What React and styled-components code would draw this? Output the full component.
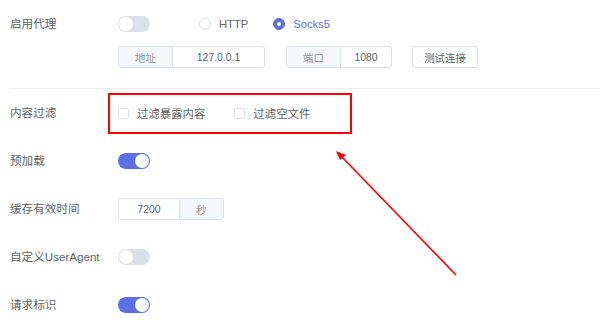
import React from "react";
import styled, { createGlobalStyle } from "styled-components";

const GlobalStyle = createGlobalStyle`
  html, body { margin: 0; padding: 0; background: #fff; }
  body {
    font-family: "Liberation Sans", "Noto Sans CJK SC", sans-serif;
    -webkit-font-smoothing: antialiased;
  }
  * { box-sizing: border-box; }
`;

const BLUE = "#5b6fe6";

const Page = styled.div`
  position: relative;
  width: 600px;
  height: 322px;
  overflow: hidden;
  background: #fff;
`;

const TopSection = styled.div`
  margin-left: 10px;
  padding: 8px 0 20px;
  border-bottom: 1px solid #ebeef5;
  display: flex;
  align-items: flex-start;
`;

const Label = styled.div`
  width: 108px;
  flex: none;
  font-size: 11.6px;
  color: #606266;
  line-height: ${(p) => p.$lh || "16px"};
  white-space: nowrap;
`;

const Stack = styled.div`
  display: flex;
  flex-direction: column;
  gap: 6px;
`;

const Line = styled.div`
  display: flex;
  align-items: center;
  height: ${(p) => p.$h || "auto"};
`;

const Track = styled.div`
  position: relative;
  width: 32px;
  height: 16px;
  border-radius: 8px;
  background: ${(p) => (p.$on ? BLUE : "#dcdfe6")};
  flex: none;
`;

const Knob = styled.span`
  position: absolute;
  top: 1px;
  left: ${(p) => (p.$on ? "17px" : "1px")};
  width: 14px;
  height: 14px;
  border-radius: 50%;
  background: #fff;
`;

const Switch = ({ on }) => (
  <Track $on={on}>
    <Knob $on={on} />
  </Track>
);

const RadioGroup = styled.div`
  display: flex;
  align-items: center;
  margin-left: 49px;
  gap: 25px;
`;

const RadioItem = styled.label`
  display: flex;
  align-items: center;
  gap: 8px;
  font-size: 11.2px;
  color: ${(p) => (p.$checked ? BLUE : "#606266")};
`;

const RadioDot = styled.span`
  width: 12px;
  height: 12px;
  border-radius: 50%;
  border: 1px solid ${(p) => (p.$checked ? BLUE : "#dcdfe6")};
  background: ${(p) => (p.$checked ? BLUE : "#fff")};
  display: flex;
  align-items: center;
  justify-content: center;
  &::after {
    content: "";
    width: 4px;
    height: 4px;
    border-radius: 50%;
    background: #fff;
    display: ${(p) => (p.$checked ? "block" : "none")};
  }
`;

const InputGroup = styled.div`
  display: flex;
  width: ${(p) => p.$w}px;
  height: 22px;
  margin-left: ${(p) => p.$ml || 0}px;
  border: 1px solid #dcdfe6;
  border-radius: 3px;
  overflow: hidden;
  font-size: 10.4px;
`;

const Addon = styled.div`
  width: ${(p) => p.$w}px;
  flex: none;
  background: #f5f7fa;
  color: #909399;
  display: flex;
  align-items: center;
  justify-content: center;
  border-${(p) => (p.$side === "right" ? "left" : "right")}: 1px solid #dcdfe6;
`;

const Value = styled.div`
  flex: 1;
  display: flex;
  align-items: center;
  justify-content: center;
  color: #606266;
`;

const Button = styled.div`
  margin-left: 20px;
  width: 66px;
  height: 22px;
  border: 1px solid #dcdfe6;
  border-radius: 3px;
  font-size: 10.4px;
  color: #606266;
  display: flex;
  align-items: center;
  justify-content: center;
`;

const List = styled.div`
  margin-left: 10px;
`;

const Row = styled.div`
  display: flex;
  align-items: center;
  height: 48px;
`;

const CheckGroup = styled.div`
  margin-left: -10px;
  width: 244px;
  height: 41px;
  border: 2px solid #f00;
  padding-left: 8px;
  display: flex;
  align-items: center;
  gap: 29px;
`;

const CheckItem = styled.label`
  display: flex;
  align-items: center;
  gap: 8px;
  font-size: 11.4px;
  color: #606266;
`;

const CheckBox = styled.span`
  width: 11px;
  height: 11px;
  border: 1px solid #dcdfe6;
  border-radius: 2px;
  background: #fff;
`;

const Overlay = styled.svg`
  position: absolute;
  left: 0;
  top: 0;
  pointer-events: none;
`;

export default function App() {
  return (
    <Page>
      <GlobalStyle />
      <TopSection>
        <Label $lh="32px">启用代理</Label>
        <Stack>
          <Line $h="32px">
            <Switch on={false} />
            <RadioGroup>
              <RadioItem>
                <RadioDot />
                HTTP
              </RadioItem>
              <RadioItem $checked>
                <RadioDot $checked />
                Socks5
              </RadioItem>
            </RadioGroup>
          </Line>
          <Line>
            <InputGroup $w={147}>
              <Addon $w={54}>地址</Addon>
              <Value>127.0.0.1</Value>
            </InputGroup>
            <InputGroup $w={106} $ml={21}>
              <Addon $w={54}>端口</Addon>
              <Value>1080</Value>
            </InputGroup>
            <Button>测试连接</Button>
          </Line>
        </Stack>
      </TopSection>
      <List>
        <Row>
          <Label>内容过滤</Label>
          <CheckGroup>
            <CheckItem>
              <CheckBox />
              过滤暴露内容
            </CheckItem>
            <CheckItem>
              <CheckBox />
              过滤空文件
            </CheckItem>
          </CheckGroup>
        </Row>
        <Row>
          <Label>预加载</Label>
          <Switch on />
        </Row>
        <Row>
          <Label>缓存有效时间</Label>
          <InputGroup $w={106}>
            <Value>7200</Value>
            <Addon $w={44} $side="right">秒</Addon>
          </InputGroup>
        </Row>
        <Row>
          <Label>自定义UserAgent</Label>
          <Switch on={false} />
        </Row>
        <Row>
          <Label>请求标识</Label>
          <Switch on />
        </Row>
      </List>
      <Overlay width="600" height="322" viewBox="0 0 600 322">
        <line x1="456" y1="275" x2="341" y2="156" stroke="#f00" strokeWidth="1.6" />
        <polygon points="336,151 346,155 340,160" fill="#f00" />
      </Overlay>
    </Page>
  );
}
